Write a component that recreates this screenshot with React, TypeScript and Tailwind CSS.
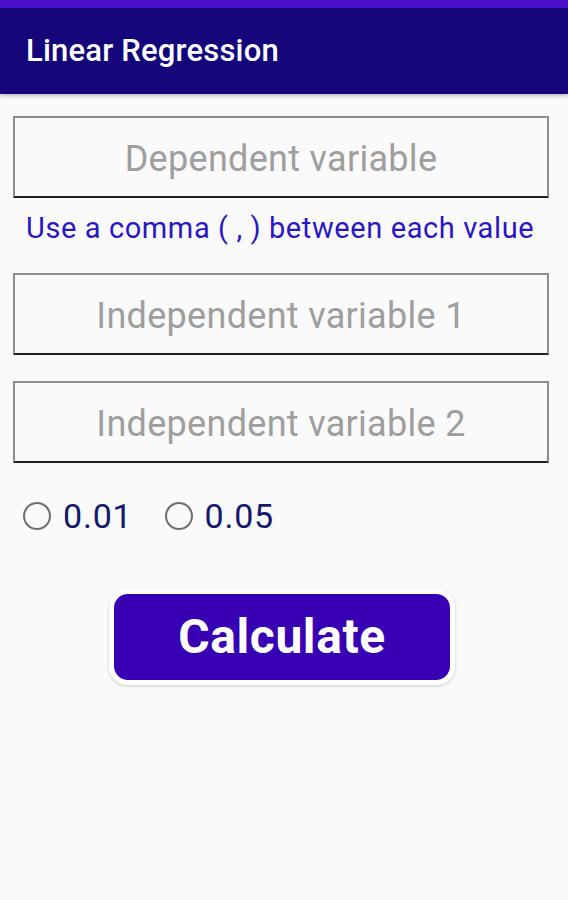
import { useState } from "react";

const fieldClass =
  "block w-full h-[82px] pt-[4px] bg-transparent border-2 border-[#8c8c8c] border-b-[#1f1f1f] text-center text-[36px] tracking-[0.3px] text-[#333] placeholder:text-[#9e9e9e] outline-none";

export default function App() {
  const [alpha, setAlpha] = useState<string | null>(null);

  return (
    <div className="min-h-[900px] bg-[#fafafa] font-['Roboto',sans-serif]">
      <div className="h-[8px] bg-[#4a10c8]" />
      <header className="h-[86px] bg-[#14067a] flex items-center pl-[26px] shadow-[0_2px_4px_rgba(0,0,0,0.25)]">
        <h1 className="text-white text-[31px] font-medium tracking-[0.2px]">Linear Regression</h1>
      </header>

      <main className="pl-[13px] pr-[19px] pt-[22px]">
        <input className={fieldClass} placeholder="Dependent variable" />
        <p className="pl-[13px] mt-[12px] text-[29px] leading-[36px] tracking-[0.6px] text-[#2b16c4]">
          Use a comma ( , ) between each value
        </p>
        <input className={`${fieldClass} mt-[27px]`} placeholder="Independent variable 1" />
        <input className={`${fieldClass} mt-[26px]`} placeholder="Independent variable 2" />

        <div className="flex items-center mt-[36px] pl-[10px] gap-[32px]">
          {["0.01", "0.05"].map((v) => (
            <label key={v} className="flex items-center gap-[12px] cursor-pointer" onClick={() => setAlpha(v)}>
              <span className="w-[28px] h-[28px] rounded-full border-[2.5px] border-[#6e6e6e] flex items-center justify-center">
                {alpha === v && <span className="w-[14px] h-[14px] rounded-full bg-[#3700b3]" />}
              </span>
              <span className="text-[34px] leading-none tracking-[0.8px] text-[#15186a]">{v}</span>
            </label>
          ))}
        </div>

        <div className="flex justify-center mt-[56px] pl-[2px]">
          <button className="w-[346px] h-[96px] rounded-[18px] bg-white p-[5px] shadow-[0_1px_3px_rgba(0,0,0,0.2)]">
            <span className="flex h-full w-full items-center justify-center rounded-[14px] bg-[#3700b3] text-white text-[48px] tracking-[0.6px] font-bold">
              Calculate
            </span>
          </button>
        </div>
      </main>
    </div>
  );
}
